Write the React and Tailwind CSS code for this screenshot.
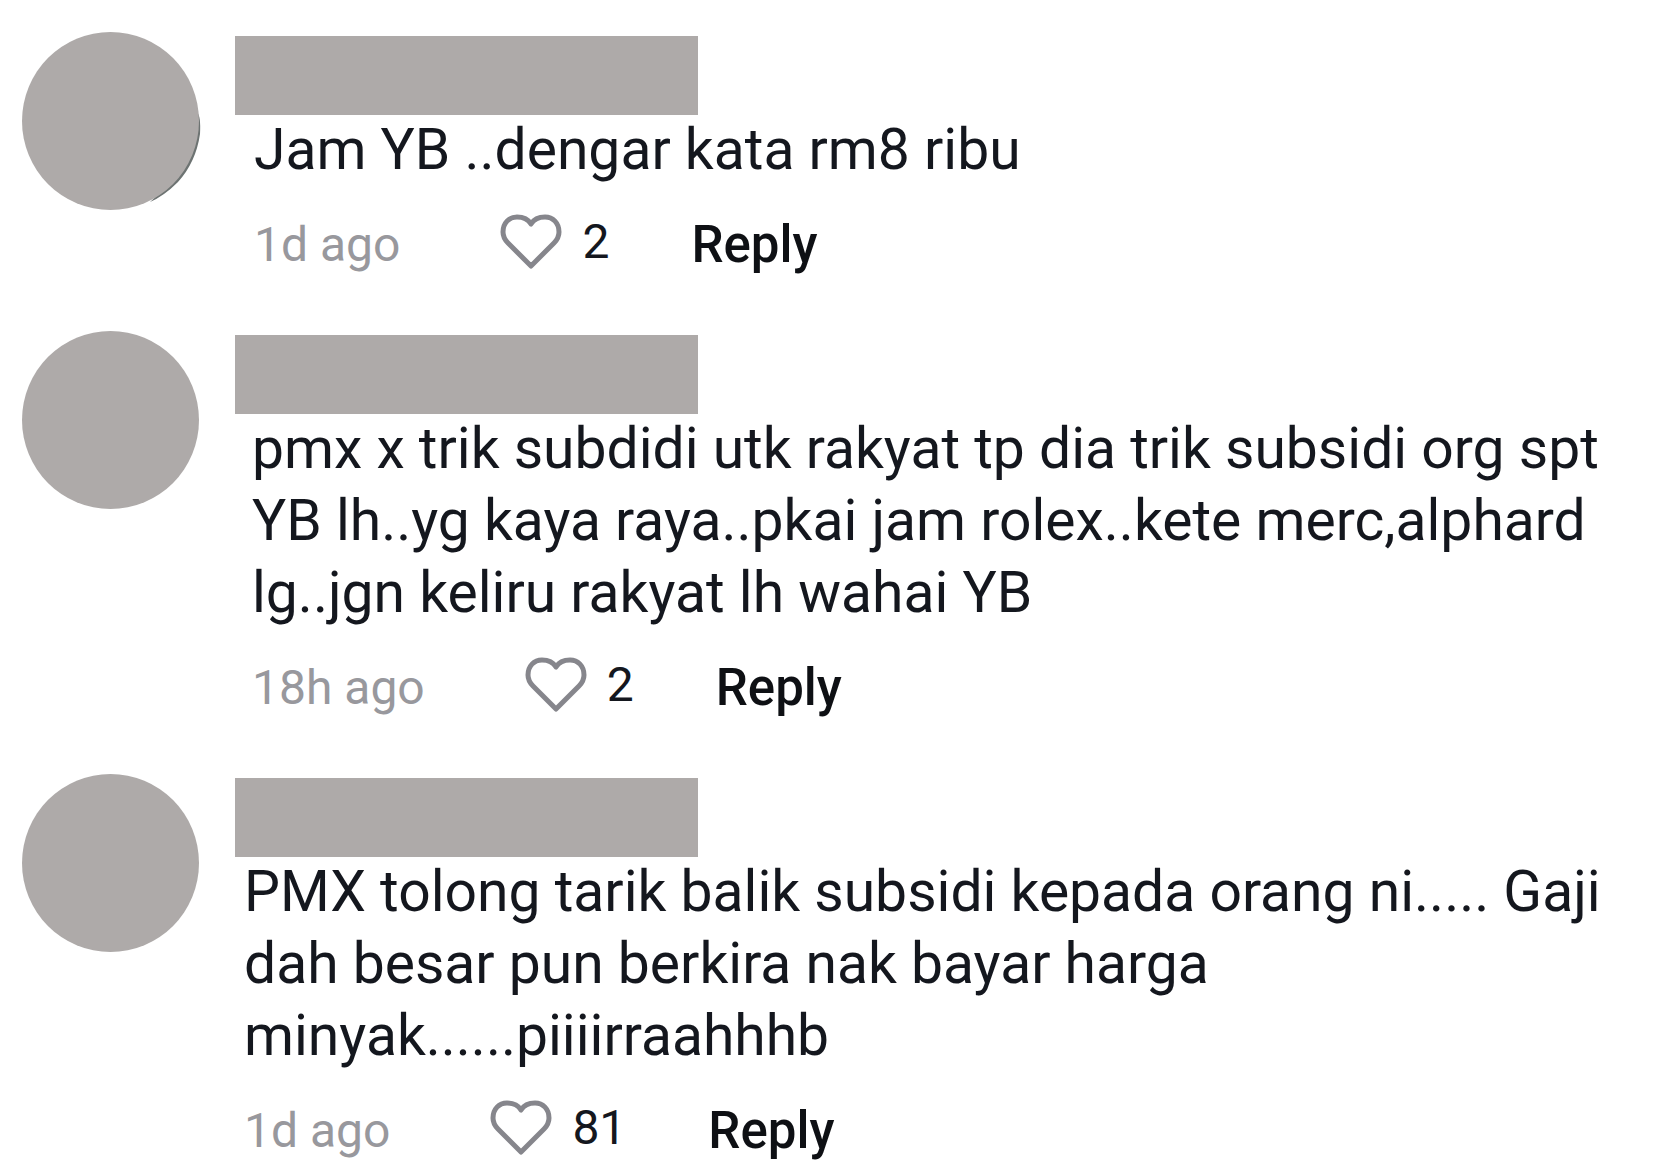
const comments = [
    {
        id: 1,
        text: ["Jam YB ..dengar kata rm8 ribu"],
        time: "1d ago",
        likes: 2,
        indent: "pl-[19px]",
        shadow: true,
    },
    {
        id: 2,
        text: [
            "pmx x trik subdidi utk rakyat tp dia trik subsidi org spt",
            "YB lh..yg kaya raya..pkai jam rolex..kete merc,alphard",
            "lg..jgn keliru rakyat lh wahai YB",
        ],
        time: "18h ago",
        likes: 2,
        indent: "pl-[17px]",
    },
    {
        id: 3,
        text: [
            "PMX tolong tarik balik subsidi kepada orang ni..... Gaji",
            "dah besar pun berkira nak bayar harga",
            "minyak......piiiirraahhhb",
        ],
        time: "1d ago",
        likes: 81,
        indent: "pl-[9px]",
    },
];

function HeartIcon() {
    return (
        <svg viewBox="0 0 62 56" fill="none" stroke="#86868c" strokeWidth="5" strokeLinejoin="round" className="w-[62px] h-[56px]">
            <path d="M31 10C28 5 23 3 17 3C9 3 3 9 3 18C3 22 4 25 8 29L31 52L54 29C58 25 59 22 59 18C59 9 53 3 45 3C39 3 34 5 31 10Z" />
        </svg>
    );
}

function Avatar({ shadow }) {
    return (
        <svg viewBox="0 0 179 178" className="w-[179px] h-[178px] shrink-0" aria-hidden="true">
            {/* thin dark edge peeking out on the lower right */}
            {shadow && <path d="M175 80Q179 84 178 102Q174 130 156 150Q142 164 128 170Q165 140 175 80Z" fill="#6d7372" />}
            <ellipse cx="88.5" cy="89" rx="88.5" ry="89" fill="#aeaaa9" />
        </svg>
    );
}

function Comment({ comment }) {
    return (
        <li className="flex items-start">
            <Avatar shadow={comment.shadow} />
            <div className="ml-[34px] pt-1 min-w-0 flex-1">
                <div className="w-[463px] h-[79px] bg-[#aeaaa9]" />
                <div className={comment.indent}>
                    <p className="-mt-px text-[57px] leading-[72px] text-[#14171e]">
                        {comment.text.map((line) => (
                            <span key={line} className="block whitespace-nowrap">{line}</span>
                        ))}
                    </p>
                    <div className="flex items-center mt-[11px] h-24 text-[48px]">
                        <span className="text-[#98989d]">{comment.time}</span>
                        <button aria-label="Like" className="ml-[100px] pb-1.5 flex items-center gap-5 text-[#14171e]">
                            <HeartIcon />
                            <span>{comment.likes}</span>
                        </button>
                        <button className="ml-[82px] text-[51px] font-medium text-[#0e1014]">Reply</button>
                    </div>
                </div>
            </div>
        </li>
    );
}

export default function App() {
    return (
        <main className="min-h-screen bg-white pl-[22px] pt-8 font-['Roboto',sans-serif]">
            <ul className="flex flex-col gap-[38px]">
                {comments.map((comment) => (
                    <Comment key={comment.id} comment={comment} />
                ))}
            </ul>
        </main>
    );
}
